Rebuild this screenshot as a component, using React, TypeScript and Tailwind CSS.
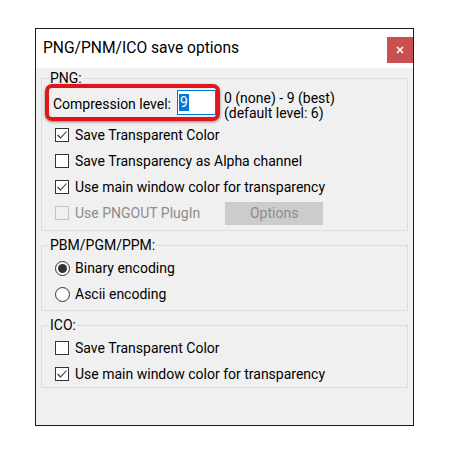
import React from "react";

const font = { fontFamily: "Roboto, 'Liberation Sans', sans-serif" };

function Check({ checked, disabled, label }: { checked?: boolean; disabled?: boolean; label: string }) {
  return (
    <div className="flex h-[26px] items-center">
      <span
        className={
          "ml-[13px] flex h-[14px] w-[14px] items-center justify-center border " +
          (disabled ? "border-[#c4c4c4] bg-[#f0f0f0]" : "border-[#333333] bg-white")
        }
      >
        {checked && (
          <svg width="12" height="12" viewBox="0 0 12 12">
            <path d="M1.5 6 L4.5 9 L10.5 2.5" fill="none" stroke="#333" strokeWidth="1.1" />
          </svg>
        )}
      </span>
      <span className={"ml-[6px] " + (disabled ? "text-[#8d8d8d]" : "text-black")}>{label}</span>
    </div>
  );
}

function Radio({ checked, label }: { checked?: boolean; label: string }) {
  return (
    <div className="flex h-[26px] items-center">
      <span className="ml-[13px] flex h-[15px] w-[15px] items-center justify-center rounded-full border border-[#333333] bg-white">
        {checked && <span className="h-[9px] w-[9px] rounded-full bg-[#333333]" />}
      </span>
      <span className="ml-[5px] text-black">{label}</span>
    </div>
  );
}

function Group({ title, className, children }: { title: string; className?: string; children: React.ReactNode }) {
  return (
    <fieldset className={"border border-[#dcdcdc] " + (className ?? "")}>
      <legend className="ml-[7px] px-[1px] leading-[16px] text-black">{title}</legend>
      {children}
    </fieldset>
  );
}

export default function App() {
  return (
    <div className="h-[455px] w-[451px] bg-white pl-[35px] pt-[28px] text-[14px]" style={font}>
      <div className="flex h-[398px] w-[379px] flex-col border border-[#1a1a1a] bg-[#f0f0f0]">
        {/* title bar */}
        <div className="flex h-[39px] shrink-0 items-start bg-white">
          <span className="ml-[7px] mt-[9px] text-[15.6px] leading-[20px] text-black">PNG/PNM/ICO save options</span>
          <button className="ml-auto mt-[8px] flex h-[26px] w-[26px] items-center justify-center bg-[#c75050]">
            <svg width="8" height="8" viewBox="0 0 8 8">
              <path d="M1 1 L7 7 M7 1 L1 7" stroke="white" strokeWidth="1.6" />
            </svg>
          </button>
        </div>

        <div className="flex flex-col px-[5px] pt-[2px]">
          <Group title="PNG:" className="pb-[4px]">
            <div className="relative mt-[3px] flex items-start">
              <div className="absolute left-[3px] top-[-5px] h-[37px] w-[175px] rounded-[7px] border-[4px] border-[#e3131b] shadow-[0_1px_3px_rgba(0,0,0,0.45)]" />
              <span className="ml-[11px] mt-[7px] leading-[16px]">Compression level:</span>
              <div className="ml-[6px] mt-[1px] flex h-[25px] w-[39px] items-center border border-[#0078d7] bg-white pl-[1px]">
                <span className="bg-[#0078d7] px-[1px] leading-[17px] text-white">9</span>
              </div>
              <div className="ml-[8px] mt-[2px] flex flex-col leading-[15px]">
                <span>0 (none) - 9 (best)</span>
                <span>(default level: 6)</span>
              </div>
            </div>
            <div className="mt-[1px]">
              <Check checked label="Save Transparent Color" />
              <Check label="Save Transparency as Alpha channel" />
              <Check checked label="Use main window color for transparency" />
              <div className="flex items-center">
                <Check disabled label="Use PNGOUT PlugIn" />
                <button className="ml-[25px] h-[23px] w-[98px] bg-[#cccccc] text-[#8d8d8d]">Options</button>
              </div>
            </div>
          </Group>

          <Group title="PBM/PGM/PPM:" className="mt-[6px] pb-[3px]">
            <div className="mt-[2px]">
              <Radio checked label="Binary encoding" />
              <Radio label="Ascii encoding" />
            </div>
          </Group>

          <Group title="ICO:" className="mt-[6px]">
            <div className="mt-[2px]">
              <Check label="Save Transparent Color" />
              <Check checked label="Use main window color for transparency" />
            </div>
          </Group>
        </div>
      </div>
    </div>
  );
}
